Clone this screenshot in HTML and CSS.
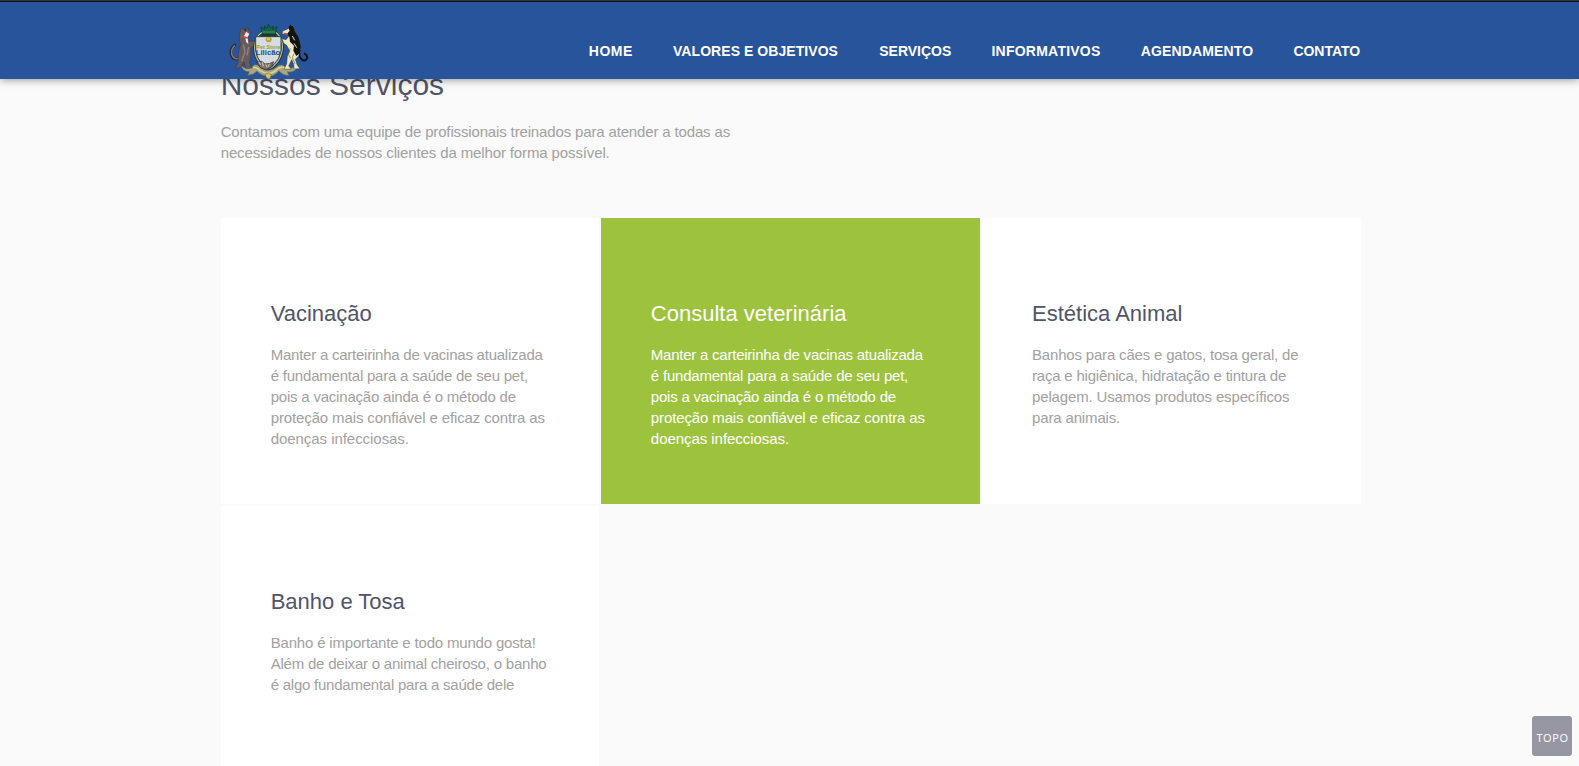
FILE: index.html
```html
<!DOCTYPE html>
<html lang="pt-BR">
<head>
<meta charset="utf-8">
<title>Pet Store Lilicão</title>
<link rel="stylesheet" href="styles.css">
</head>
<body>
<header class="header">
  <div class="header-inner">
    <a class="logo" href="#">
      <svg class="logo-art" viewBox="0 0 300 216" role="img" aria-label="Pet Store Lilicão">
        <!-- ribbon -->
        <path d="M60 152q15 16 36 8q5-12 20-5q14 14 28 14q16 0 30-13q14-8 22 4q20 8 38-7l-8 16q-14 8-24 4l5 11q-20 0-30-14q-16 18-32 16q-22 0-34-15q-12 13-27 13l4-11q-16 2-28-21z" fill="#a9a67f" stroke="#6f7059" stroke-width="2"/>
        <path d="M99 160q14 0 20 9q12 9 26 9q16 0 27-13q10-8 22-4" fill="none" stroke="#ddd598" stroke-width="4"/>
        <path d="M135 181l10-3 9 4-3 9q-6 8-12-1z" fill="#d3c768" stroke="#776c34" stroke-width="2"/>
        <!-- cat -->
        <path d="M64 132q-26 10-31-12q-2-17 12-27" fill="none" stroke="#292d3a" stroke-width="9" stroke-linecap="round"/>
        <path d="M64 132q-25 8-29-12q-2-16 9-25" fill="none" stroke="#8b7d7e" stroke-width="4" stroke-linecap="round"/>
        <path d="M62 45l5-3 5 5 10-8 5 12 5 7-7 9 4 16 16-4 8 6-20 17-1 27-4 20 9 13-20 1-5-20-10 19-16-1 8-14 1-30 6-24-3-26z" fill="#685b5d" stroke="#38343b" stroke-width="1.5"/>
        <path d="M78 53l10 7-5 9 2 22-7-8-2-14-8-1q8-4 10-15z" fill="#eeeaea"/>
        <path d="M64 67l20 5" stroke="#d53c3e" stroke-width="5"/>
        <path d="M70 92l5 22-10 28M86 99l-5 25" fill="none" stroke="#94847f" stroke-width="4"/>
        <path d="M71 45l5 8 5-8" fill="#34323b"/>
        <!-- dog -->
        <path d="M235 106l5 24q9 14 18 7q9-8-3-18" fill="none" stroke="#101211" stroke-width="6" stroke-linecap="round"/>
        <path d="M214 34l6 8 8 14 8 24 5 26-5 20-10 10 6 18 8 10-18 1-1-14-6-14-9 19 8 9-22 1 8-17 2-23 7-15-9-17-19-13-3-9 20 5 9-11-9-5-12-1 2-9 15-6z" fill="#eee8c5" stroke="#343425" stroke-width="1.5"/>
        <path d="M211 32l9 6 5 14 11 19 6 25-2 22-11 8-9-16 2-15-12-12-2-15-7-8 8-10-4-8z" fill="#101413"/>
        <path d="M190 56l13 2-7 6z" fill="#cf3f4c"/>
        <path d="M217 66l7 13M222 88l8 13" stroke="#e8dfb2" stroke-width="3"/>
        <path d="M211 103l-6 18 7 12M222 119l-5 12 8 19" fill="none" stroke="#665c45" stroke-width="2"/>
        <!-- shield -->
        <path d="M112 64q12-19 34-17q23-2 34 17q14 19 12 39q-2 31-22 50q-14 15-24 15q-14-1-27-16q-20-20-20-49q0-21 13-39z" fill="#28352d"/>
        <path d="M115 65q13-16 31-15q20-1 31 15q11 17 10 36q-2 29-20 48q-12 14-21 15q-13-2-24-16q-18-18-18-47q0-20 11-36z" fill="none" stroke="#c2c19a" stroke-width="4"/>
        <path d="M107 68h76v43q-4 24-20 39-10 10-17 14-10-4-22-16-15-18-17-40z" fill="#d8dce0" stroke="#184c48" stroke-width="3"/>
        <!-- crown -->
        <path d="M122 39l12 7-1-10 9 6 3-11 6 11 9-6-2 10 13-8-5 23h-38z" fill="#176448" stroke="#10372d" stroke-width="2"/>
        <path d="M127 54h38" stroke="#3b9560" stroke-width="3"/>
        <path d="M139 70h13l4 6-4 9h-11l-5-8z" fill="#b5a73c"/>
        <path d="M141 75h9" stroke="#f7e9a2" stroke-width="3"/>
        <text class="logo-small" x="109" y="105" textLength="72" lengthAdjust="spacingAndGlyphs">Pet Store</text>
        <text class="logo-large" x="107" y="122" textLength="74" lengthAdjust="spacingAndGlyphs">Lilicão</text>
        <!-- clasped paws -->
        <path d="M111 145l14-3 10 8 15-2 11-5-6 16-17 9-17-7z" fill="#7a716b" stroke="#272b2c" stroke-width="2"/>
        <path d="M117 144l4 8m6-7l3 12m7-6l4 9m7-11l-3 9" stroke="#ddd8bd" stroke-width="3"/>
      </svg>
    </a>
    <nav class="nav">
      <a class="nav-home" href="#">HOME</a>
      <a class="nav-values" href="#">VALORES E OBJETIVOS</a>
      <a class="nav-services" href="#">SERVIÇOS</a>
      <a class="nav-news" href="#">INFORMATIVOS</a>
      <a class="nav-booking" href="#">AGENDAMENTO</a>
      <a class="nav-contact" href="#">CONTATO</a>
    </nav>
  </div>
</header>
<main class="services">
  <h2 class="section-title">Nossos Serviços</h2>
  <p class="intro"><span class="t2">Contamos com uma equipe de profissionais treinados para atender a todas as</span><br><span class="t1">necessidades de nossos clientes da melhor forma possível.</span></p>
  <div class="cards">
    <article class="card">
      <h3>Vacinação</h3>
      <p><span class="t5">Manter a carteirinha de vacinas atualizada</span><br><span class="t4">é fundamental para a saúde de seu pet,</span><br><span class="t4">pois a vacinação ainda é o método de</span><br><span class="t1">proteção mais confiável e eficaz contra as</span><br><span class="t0">doenças infecciosas.</span></p>
    </article>
    <article class="card card-active">
      <h3>Consulta veterinária</h3>
      <p><span class="t5">Manter a carteirinha de vacinas atualizada</span><br><span class="t4">é fundamental para a saúde de seu pet,</span><br><span class="t4">pois a vacinação ainda é o método de</span><br><span class="t1">proteção mais confiável e eficaz contra as</span><br><span class="t0">doenças infecciosas.</span></p>
    </article>
    <article class="card">
      <h3>Estética Animal</h3>
      <p><span class="t3">Banhos para cães e gatos, tosa geral, de</span><br><span class="t4">raça e higiênica, hidratação e tintura de</span><br><span class="t2">pelagem. Usamos produtos específicos</span><br><span class="t2">para animais.</span></p>
    </article>
    <article class="card">
      <h3>Banho e Tosa</h3>
      <p><span class="t3">Banho é importante e todo mundo gosta!</span><br><span class="t4">Além de deixar o animal cheiroso, o banho</span><br><span class="t5">é algo fundamental para a saúde dele</span></p>
    </article>
  </div>
</main>
<a class="to-top" href="#">TOPO</a>
</body>
</html>
```
FILE: styles.css
```css
* { box-sizing: border-box; }

body {
  margin: 0;
  height: 766px;
  overflow: hidden;
  background: #fafafa;
  color: #a1a1a1;
  font: 15px/21px "Liberation Sans", Arial, sans-serif;
}

a { color: inherit; text-decoration: none; }

.header {
  position: relative;
  z-index: 2;
  height: 79px;
  background: #27549b;
  border-top: 1px solid #333435;
  box-shadow: inset 0 1px #07131d, 0 1px 8px rgba(0, 0, 0, .4);
}

.header-inner {
  display: flex;
  justify-content: space-between;
  width: 1140px;
  margin-left: 220px;
}

.logo {
  display: block;
  width: 100px;
  height: 72px;
  margin-top: 13px;
}

.logo-art { display: block; width: 100px; height: 72px; }

.logo-small { font: bold 17px "Liberation Sans", Arial, sans-serif; fill: #8aa63a; }
.logo-large { font: bold 20px "Liberation Sans", Arial, sans-serif; fill: #174f91; }

.nav {
  display: flex;
  gap: 40.2px;
  padding-top: 40px;
  color: #fff;
  font-size: 14px;
  font-weight: bold;
  white-space: nowrap;
}

.nav-home { letter-spacing: .5px; }
.nav-values { letter-spacing: .06px; }
.nav-services { margin-left: 1px; letter-spacing: 0; }
.nav-news { letter-spacing: .23px; }
.nav-booking { letter-spacing: .14px; }
.nav-contact { letter-spacing: -.05px; }

.services { width: 1140px; margin-left: 220.7px; }

.section-title {
  margin: 0;
  padding-top: 1px;
  color: #50546a;
  font-size: 30px;
  font-weight: normal;
  line-height: 10px;
}

.intro { margin: 31px 0 0; }

/* Letter fitting for body copy, loosest to tightest */
.t0 { letter-spacing: -.05px; }
.t1 { letter-spacing: -.124px; }
.t2 { letter-spacing: -.148px; }
.t3 { letter-spacing: -.18px; }
.t4 { letter-spacing: -.21px; }
.t5 { letter-spacing: -.235px; }

.cards {
  display: grid;
  grid-template-columns: repeat(3, 1fr);
  grid-auto-rows: 286px;
  gap: 2px;
  margin-top: 55px;
}

.card { padding: 82px 0 0 50px; background: #fff; }

.card h3 {
  margin: 0 0 16px;
  color: #50546a;
  font-size: 22px;
  font-weight: normal;
  line-height: 28px;
}

.card p { margin: 0; white-space: nowrap; }

.card-active { padding-left: 49.5px; background: #9dc33e; color: #fff; }
.card-active h3 { color: #fff; }

.to-top {
  position: fixed;
  right: 7px;
  bottom: 10px;
  z-index: 3;
  display: grid;
  place-items: center;
  width: 40px;
  height: 40px;
  padding: 4px 0 0 1px;
  border-radius: 3px;
  background: #9697a3;
  color: #fff;
  font: 11px/16px "Open Sans", sans-serif;
  letter-spacing: .6px;
}
```
